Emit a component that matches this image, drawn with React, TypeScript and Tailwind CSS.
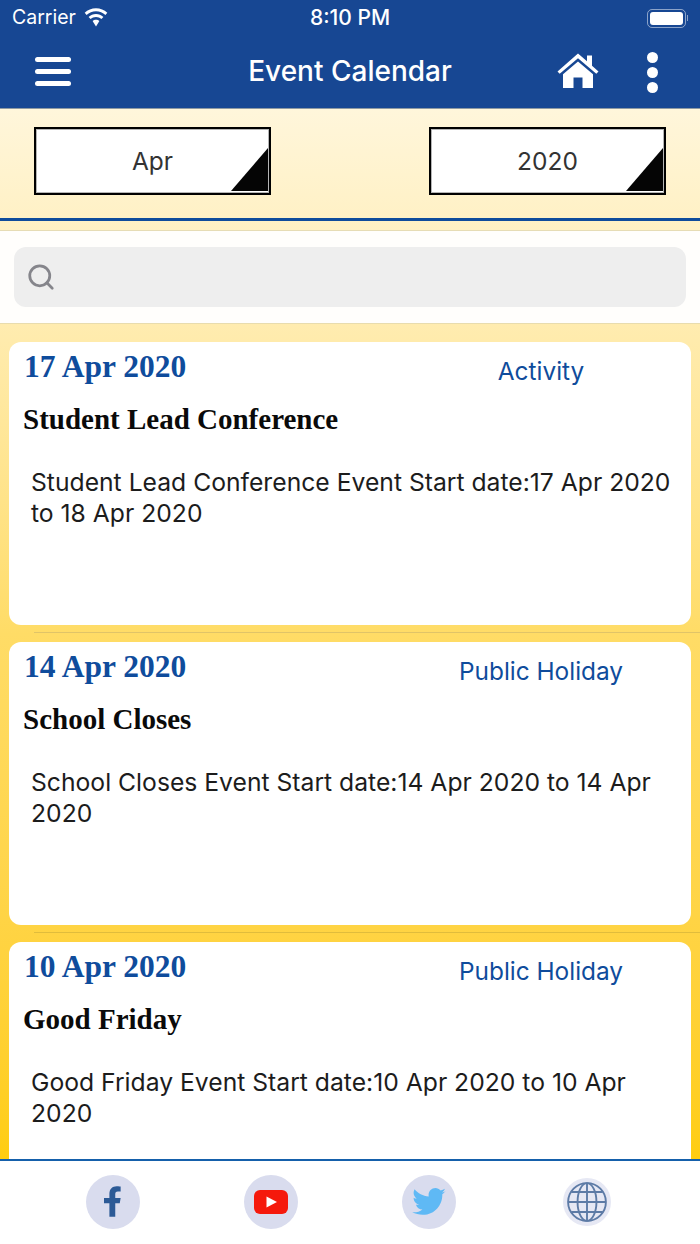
import { Search } from "lucide-react";

const events = [
  {
    date: "17 Apr 2020",
    kind: "Activity",
    title: "Student Lead Conference",
    body: "Student Lead Conference Event Start date:17 Apr 2020 to 18 Apr 2020",
  },
  {
    date: "14 Apr 2020",
    kind: "Public Holiday",
    title: "School Closes",
    body: "School Closes Event Start date:14 Apr 2020 to 14 Apr 2020",
  },
  {
    date: "10 Apr 2020",
    kind: "Public Holiday",
    title: "Good Friday",
    body: "Good Friday Event Start date:10 Apr 2020 to 10 Apr 2020",
  },
];

function Wifi() {
  return (
    <svg width="26" height="20" viewBox="0 0 26 20" fill="#fff">
      <path d="M13 3.2c3.6 0 6.9 1.4 9.4 3.7l1.9-2.1C21.300 2 17.300.3 13 .3S4.700 2 1.700 4.800l1.900 2.100C6.100 4.600 9.400 3.200 13 3.200z" />
      <path d="M13 8.900c2.100 0 4 .8 5.400 2.100l2-2.100C18.400 7.100 15.800 6 13 6S7.600 7.100 5.600 8.900l2 2.100c1.400-1.300 3.300-2.100 5.400-2.100z" />
      <path d="M13 11.700c-1.300 0-2.500.5-3.400 1.300l3.400 5.600 3.400-5.600c-.9-.8-2.100-1.300-3.400-1.300z" />
    </svg>
  );
}

function Battery() {
  return (
    <div className="flex items-center gap-[1px]">
      <div className="w-[39px] h-[19px] rounded-[5px] border border-white/50 p-[2px]">
        <div className="w-full h-full rounded-[3px] bg-white" />
      </div>
      <div className="w-[1px] h-[6px] bg-white/50" />
    </div>
  );
}

function HomeIcon() {
  return (
    <svg width="42" height="36" viewBox="0 0 42 36" fill="#fff">
      <path d="M21 0.500 L30 8.300 V2.500 H35 V12.700 L41.500 18.500 L39.300 20.800 L21 5.300 L2.700 20.800 L0.500 18.500 Z" />
      <path d="M21 8.500 L36 21.200 V35 H25.500 V24.500 H16.500 V35 H6 V21.200 Z" />
    </svg>
  );
}

function Picker({ label }: { label: string }) {
  return (
    <div className="relative w-[237px] h-[68px] bg-white border-2 border-black shadow-[inset_0_0_0_1px_#b5b5b5] flex items-center justify-center">
      <span className="text-[24.500px] text-[#333]">{label}</span>
      <svg className="absolute right-[1px] bottom-[2px]" width="37" height="43" viewBox="0 0 37 43">
        <path d="M37 0V43H0Z" fill="#050505" />
      </svg>
    </div>
  );
}

function EventCard({ date, kind, title, body }: (typeof events)[number]) {
  return (
    <div className="shrink-0 h-[283px] mx-[9px] bg-white rounded-[12px] pt-[6px]">
      <div className="flex items-start">
        <div className="w-[490px] pl-[15px] font-['Liberation_Serif',serif] font-bold text-[31.500px] leading-[38px] text-[#0f4c9c]">{date}</div>
        <div className="w-[84px] flex justify-center whitespace-nowrap text-[24.400px] leading-[38px] mt-[4px] text-[#0f4c9c]">{kind}</div>
      </div>
      <div className="mt-[12px] pl-[14px] font-['Liberation_Serif',serif] font-bold text-[29px] leading-[34px] text-[#0a0a0a]">{title}</div>
      <p className="mt-[31px] pl-[22px] pr-[12px] text-[24.700px] leading-[31px] text-[#1c1c1c]">{body}</p>
    </div>
  );
}

function SocialButton({ children, small }: { children: React.ReactNode; small?: boolean }) {
  return (
    <div className={small ? "w-[48px] h-[48px] rounded-full bg-[#e6e8f4] flex items-center justify-center" : "w-[54px] h-[54px] rounded-full bg-[#d9dcee] flex items-center justify-center"}>
      {children}
    </div>
  );
}

export default function App() {
  return (
    <div className="w-[700px] h-[1244px] flex flex-col overflow-hidden bg-white font-['Inter',sans-serif]">
      <header className="h-[109px] shrink-0 bg-[#174793] border-b border-[#8f9aa3] text-white flex flex-col">
        <div className="h-[36px] px-[12px] flex items-center justify-between">
          <div className="w-[150px] flex items-center gap-[7px] text-[19.500px]">
            <span>Carrier</span>
            <Wifi />
          </div>
          <span className="text-[21px] font-medium">8:10 PM</span>
          <div className="w-[150px] flex justify-end">
            <Battery />
          </div>
        </div>
        <div className="flex-1 relative flex items-center justify-center">
          <div className="absolute left-[35px] top-[21px] flex flex-col gap-[7px]">
            <div className="w-[36px] h-[5px] rounded-full bg-white" />
            <div className="w-[36px] h-[5px] rounded-full bg-white" />
            <div className="w-[36px] h-[5px] rounded-full bg-white" />
          </div>
          <span className="text-[28px] font-medium pb-[2px]">Event Calendar</span>
          <div className="absolute left-[557px] top-[17px]">
            <HomeIcon />
          </div>
          <div className="absolute left-[647px] top-[16px] flex flex-col gap-[4px]">
            <div className="w-[11px] h-[11px] rounded-full bg-white" />
            <div className="w-[11px] h-[11px] rounded-full bg-white" />
            <div className="w-[11px] h-[11px] rounded-full bg-white" />
          </div>
        </div>
      </header>

      <main className="flex-1 min-h-0 overflow-hidden flex flex-col bg-gradient-to-b from-[#fff6db] via-[#ffdc66] to-[#ffcd0f]">
        <div className="shrink-0 h-[112px] pt-[18px] px-[34px] flex justify-between items-start border-b-[3px] border-[#0f4c9c]">
          <Picker label="Apr" />
          <Picker label="2020" />
        </div>
        <div className="h-[10px] shrink-0 border-b border-[#e6dcb5]" />
        <div className="shrink-0 h-[93px] bg-[#fffefc] px-[14px] pt-[16px] border-b border-[#e8dcae]">
          <div className="h-[60px] rounded-[12px] bg-[#eeeeee] flex items-center pl-[12px]">
            <Search size={30} strokeWidth={2.2} className="text-[#85858b]" />
          </div>
        </div>
        <div className="relative flex-1 min-h-0 overflow-hidden flex flex-col gap-[17px] pt-[18px]">
          {events.map((ev) => (
            <EventCard key={ev.date} {...ev} />
          ))}
          <div className="absolute left-[34px] right-0 top-[308px] h-[1px] bg-[#e0c468]" />
          <div className="absolute left-[34px] right-0 top-[608px] h-[1px] bg-[#e0bc3c]" />
        </div>
      </main>

      <footer className="h-[85px] shrink-0 bg-white border-t-2 border-[#1560ab] flex items-center pb-[2px]">
        <div className="w-full relative h-[54px]">
          <div className="absolute left-[86px]">
            <SocialButton>
              <svg width="18" height="33" viewBox="0 0 20 34" fill="#2c5a96">
                <path d="M6 34V19H0V13H6V8.500C6 3 9.500 0 14 0C16.500 0 18.500.3 18.500.3V5.800H15.500C13 5.800 12.500 7 12.500 9V13H18.500L17.500 19H12.500V34Z" />
              </svg>
            </SocialButton>
          </div>
          <div className="absolute left-[244px]">
            <SocialButton>
              <svg width="34" height="24" viewBox="0 0 34 24">
                <rect width="34" height="24" rx="6" fill="#f5190c" />
                <path d="M12.500 6.500L23 12L12.500 17.500Z" fill="#fff" />
              </svg>
            </SocialButton>
          </div>
          <div className="absolute left-[402px]">
            <SocialButton>
              <svg width="34" height="28" viewBox="0 0 24 20" fill="#5fb9f5">
                <path d="M24 2.400c-.9.400-1.800.700-2.800.800 1-.600 1.800-1.600 2.200-2.700-1 .600-2 1-3.100 1.200C19.300.700 18 0 16.600 0c-2.700 0-4.900 2.200-4.900 4.900 0 .4 0 .8.100 1.100C7.700 5.800 4.100 3.900 1.700.900c-.400.700-.700 1.600-.700 2.500 0 1.700.900 3.200 2.200 4.100-.800 0-1.600-.200-2.200-.600v.1c0 2.400 1.700 4.400 3.900 4.800-.400.100-.800.200-1.300.200-.300 0-.600 0-.900-.100.600 2 2.400 3.400 4.600 3.400-1.700 1.300-3.800 2.100-6.100 2.100-.400 0-.800 0-1.200-.100C2.200 18.300 4.800 19.100 7.500 19.100c9.100 0 14-7.500 14-14v-.600c1-.700 1.800-1.600 2.500-2.100z" />
              </svg>
            </SocialButton>
          </div>
          <div className="absolute left-[563px] top-[3px]">
            <SocialButton small>
              <svg width="42" height="42" viewBox="0 0 40 40" fill="none" stroke="#5d7ba6" strokeWidth="1.800">
                <circle cx="20" cy="20" r="18" />
                <ellipse cx="20" cy="20" rx="9" ry="18" />
                <path d="M20 2V38M2 20H38M5 10.500H35M5 29.500H35" />
              </svg>
            </SocialButton>
          </div>
        </div>
      </footer>
    </div>
  );
}
